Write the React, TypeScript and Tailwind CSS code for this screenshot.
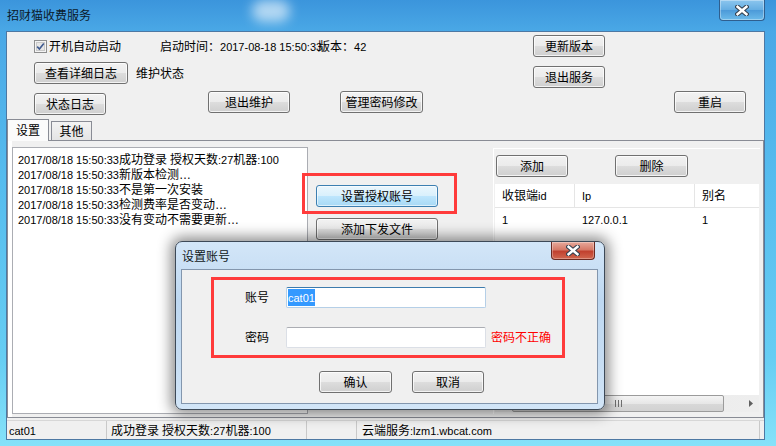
import React from "react";

function T({ s }: { s: string }) {
  const parts = s.match(/[\x00-\xff]+|[^\x00-\xff]+/g) || [];
  return (
    <span className="whitespace-pre">
      {parts.map((p, i) =>
        /^[\x00-\xff]/.test(p) ? (
          <span key={i} className="text-[11px]">{p}</span>
        ) : (
          <span key={i} className="text-[12px]">{p}</span>
        )
      )}
    </span>
  );
}

function Btn({ label, className, focus }: { label: string; className: string; focus?: boolean }) {
  return (
    <div
      className={
        "flex h-[22px] shrink-0 items-center justify-center rounded-[3px] border leading-[14px] text-black " +
        (focus
          ? "border-[#3c7fb1] bg-[linear-gradient(180deg,#eaf6fd_0%,#d9f0fc_50%,#bee6fd_50%,#a7d9f5_100%)] shadow-[inset_0_0_0_1px_rgba(255,255,255,0.6)] "
          : "border-[#707070] bg-[linear-gradient(180deg,#f2f2f2_0%,#ebebeb_50%,#dddddd_50%,#cfcfcf_100%)] shadow-[inset_0_0_0_1px_rgba(255,255,255,0.75)] ") +
        className
      }
    >
      <T s={label} />
    </div>
  );
}

function XIcon() {
  return (
    <svg width="14" height="11" viewBox="0 0 14 11">
      <path d="M2.5 1.8 L11.5 9.2 M11.5 1.8 L2.5 9.2" stroke="#34404f" strokeWidth="4.6" strokeLinecap="square" />
      <path d="M2.5 1.8 L11.5 9.2 M11.5 1.8 L2.5 9.2" stroke="#ffffff" strokeWidth="2.4" strokeLinecap="square" />
    </svg>
  );
}

export default function App() {
  const logs = [
    "2017/08/18 15:50:33成功登录 授权天数:27机器:100",
    "2017/08/18 15:50:33新版本检测…",
    "2017/08/18 15:50:33不是第一次安装",
    "2017/08/18 15:50:33检测费率是否变动…",
    "2017/08/18 15:50:33没有变动不需要更新…",
  ];
  return (
    <div className="relative h-[446px] w-[776px] overflow-hidden bg-[linear-gradient(180deg,#3b95dc_0%,#4aa8e6_7%,#56bcee_40%,#66cdf3_80%,#85e2f9_100%)] font-['Liberation_Sans','Noto_Sans_CJK_SC',sans-serif] text-black select-none">
      {/* desktop reflection blob */}
      <div className="absolute left-[252px] top-[0px] h-[22px] w-[38px] rounded-full bg-white/60 blur-[6px]" />
      {/* title bar */}
      <div className="relative flex h-[31px] items-start">
        <div className="ml-[7px] mt-[8px] leading-[14px] text-[#0b1a2b]">
          <T s="招财猫收费服务" />
        </div>
        <div className="ml-auto mr-[11px] flex h-[21px] w-[46px] items-center justify-center rounded-b-[4px] border border-t-0 border-[#2f5f8f] bg-[linear-gradient(180deg,#8cc6ee_0%,#64ade2_50%,#4c9ad9_52%,#6cbbea_100%)] shadow-[inset_0_0_0_1px_rgba(255,255,255,0.35)]">
          <XIcon />
        </div>
      </div>

      {/* client area */}
      <div className="ml-[6px] flex h-[409px] w-[759px] flex-col border border-[#4d78a3] bg-[#f0f0f0]">
        {/* row 1 */}
        <div className="mt-[3px] flex h-[22px] items-center leading-[14px]">
          <div className="ml-[27px] flex w-[126px] items-center gap-[2px]">
            <svg width="13" height="13" viewBox="0 0 13 13">
              <rect x="0.5" y="0.5" width="12" height="12" fill="#f4f4f4" stroke="#8e8f8f" />
              <rect x="2.5" y="2.5" width="8" height="8" fill="#e6e6e6" stroke="#c9c9c9" />
              <path d="M3.2 6.6 L5.4 9 L9.8 3.4" stroke="#3f5a8f" strokeWidth="1.6" fill="none" />
            </svg>
            <span className="whitespace-nowrap"><T s="开机自动启动" /></span>
          </div>
          <div className="w-[158px] whitespace-nowrap"><T s="启动时间：2017-08-18 15:50:33" /></div>
          <div className="w-[215px] whitespace-nowrap"><T s="版本：42" /></div>
          <Btn label="更新版本" className="w-[72px]" />
        </div>
        {/* row 2 */}
        <div className="mt-[5px] flex h-[26px] items-start leading-[14px]">
          <Btn label="查看详细日志" className="ml-[27px] w-[94px]" />
          <div className="ml-[8px] flex h-[22px] w-[397px] items-center"><T s="维护状态" /></div>
          <Btn label="退出服务" className="mt-[4px] w-[72px]" />
        </div>
        {/* row 3 */}
        <div className="mt-[3px] flex h-[24px] items-start">
          <Btn label="状态日志" className="ml-[27px] mt-[2px] w-[72px]" />
          <Btn label="退出维护" className="ml-[102px] w-[82px]" />
          <Btn label="管理密码修改" className="ml-[50px] w-[83px]" />
          <Btn label="重启" className="ml-[251px] w-[72px]" />
        </div>
        {/* tabs */}
        <div className="mt-[4px] flex h-[21px] items-end leading-[14px]">
          <div className="relative z-10 mb-[-1px] flex h-[22px] w-[42px] items-center justify-center border border-b-0 border-[#898c95] bg-[#fbfbfb]">
            <T s="设置" />
          </div>
          <div className="ml-[2px] flex h-[19px] w-[41px] items-center justify-center border border-b-0 border-[#898c95] bg-[linear-gradient(180deg,#f3f3f3,#e4e4e4)]">
            <T s="其他" />
          </div>
        </div>
        {/* tab panel */}
        <div className="flex h-[278px] border border-[#898c95] bg-[#f0f0f0]">
          <div className="w-[4px] bg-white" />
          <div className="mt-[6px] h-[267px] w-[296px] border border-[#abadb3] bg-white pl-[5px] pt-[4px] leading-[13px]">
            {logs.map((l, i) => (
              <div key={i} className="whitespace-nowrap"><T s={l} /></div>
            ))}
          </div>
          <div className="relative w-[185px]">
            <Btn label="设置授权账号" focus className="ml-[8px] mt-[44px] w-[122px]" />
            <Btn label="添加下发文件" className="ml-[8px] mt-[11px] w-[122px]" />
            <div className="absolute left-[-6px] top-[32px] h-[41px] w-[155px] border-[3px] border-[#ff3b3b]" />
          </div>
          <div className="mt-[7px] flex h-[266px] w-[267px] flex-col border-l border-t border-white bg-[#f0f0f0]">
            <div className="mt-[6px] flex">
              <Btn label="添加" className="ml-[2px] w-[72px]" />
              <Btn label="删除" className="ml-[47px] w-[73px]" />
            </div>
            <div className="ml-[1px] mt-[7px] flex h-[228px] w-[264px] flex-col bg-white leading-[14px]">
              <div className="flex h-[24px] border-b border-[#e5e5e5]">
                <div className="flex w-[80px] items-center border-r border-[#e5e5e5] pl-[7px]"><T s="收银端id" /></div>
                <div className="flex w-[120px] items-center border-r border-[#e5e5e5] pl-[7px]"><T s="Ip" /></div>
                <div className="flex flex-1 items-center pl-[7px]"><T s="别名" /></div>
              </div>
              <div className="mt-[3px] flex h-[17px] items-center">
                <div className="w-[80px] pl-[7px]"><T s="1" /></div>
                <div className="w-[120px] pl-[7px]"><T s="127.0.0.1" /></div>
                <div className="flex-1 pl-[7px]"><T s="1" /></div>
              </div>
              <div className="mt-auto flex h-[17px] bg-[linear-gradient(90deg,#e8e8e8,#eeeeee)]">
                <div className="flex w-[17px] items-center justify-center">
                  <svg width="4" height="7" viewBox="0 0 4 7"><path d="M4 0 L0 3.5 L4 7 Z" fill="#606060" /></svg>
                </div>
                <div className="flex h-[17px] w-[212px] items-center justify-center rounded-[2px] border border-[#9b9b9b] bg-[linear-gradient(180deg,#f4f4f4_0%,#e7e7e7_50%,#d8d8d8_51%,#d2d2d2_100%)]">
                  <div className="flex gap-[2px]">
                    <div className="h-[7px] w-[1px] bg-[#6f6f6f]" />
                    <div className="h-[7px] w-[1px] bg-[#6f6f6f]" />
                    <div className="h-[7px] w-[1px] bg-[#6f6f6f]" />
                  </div>
                </div>
                <div className="flex-1" />
                <div className="flex w-[17px] items-center justify-center">
                  <svg width="4" height="7" viewBox="0 0 4 7"><path d="M0 0 L4 3.5 L0 7 Z" fill="#606060" /></svg>
                </div>
              </div>
            </div>
          </div>
        </div>
        {/* status bar */}
        <div className="mt-[2px] flex h-[19px] items-center border-t border-[#d7d7d7] bg-[#f0f0f0] leading-[14px]">
          <div className="flex h-full w-[100px] items-center border-r border-[#c9c9c9] pl-[2px]"><T s="cat01" /></div>
          <div className="flex h-full w-[200px] items-center border-r border-[#c9c9c9] pl-[4px] whitespace-nowrap"><T s="成功登录 授权天数:27机器:100" /></div>
          <div className="h-full w-[50px] border-r border-[#c9c9c9]" />
          <div className="flex h-full w-[403px] items-center border-r border-[#c9c9c9] pl-[5px] whitespace-nowrap"><T s="云端服务:lzm1.wbcat.com" /></div>
        </div>
      </div>

      {/* dialog */}
      <div className="absolute left-[175px] top-[241px] flex h-[169px] w-[430px] flex-col rounded-[7px] border border-[#3d4957] bg-[linear-gradient(180deg,#d3e6f8_0%,#bed8f1_35%,#c6ddf3_70%,#d2e5f7_100%)] shadow-[0_0_14px_4px_rgba(0,0,0,0.45)]">
        <div className="flex h-[27px] items-start">
          <div className="ml-[6px] mt-[7px] leading-[14px] text-[#101820]"><T s="设置账号" /></div>
          <div className="ml-auto mr-[9px] flex h-[18px] w-[44px] items-center justify-center rounded-b-[4px] border border-t-0 border-[#6b2a22] bg-[linear-gradient(180deg,#e7a99b_0%,#d67a68_45%,#c1412f_55%,#d1674f_100%)] shadow-[inset_0_0_0_1px_rgba(255,255,255,0.3)]">
            <XIcon />
          </div>
        </div>
        <div className="ml-[5px] flex h-[135px] w-[417px] flex-col border border-[#8396ad] bg-[#f0f0f0] leading-[14px]">
          <div className="ml-[29px] mt-[7px] h-[81px] w-[354px] border-[3px] border-[#ff3b3b]">
            <div className="mt-[7px] flex h-[21px] items-center">
              <div className="ml-[31px] w-[41px]"><T s="账号" /></div>
              <div className="flex h-[21px] w-[200px] items-center rounded-[2px] border border-[#b5cfe7] border-t-[#3d7bad] bg-white pl-[1px]">
                <span className="bg-[#3399ff] leading-[16px] text-white"><T s="cat01" /></span>
              </div>
            </div>
            <div className="mt-[19px] flex h-[21px] items-center">
              <div className="ml-[31px] w-[41px]"><T s="密码" /></div>
              <div className="h-[21px] w-[200px] rounded-[2px] border border-[#dbdfe6] border-t-[#abadb3] bg-white" />
              <div className="ml-[5px] whitespace-nowrap text-[#ff0000]"><T s="密码不正确" /></div>
            </div>
          </div>
          <div className="mt-[13px] flex">
            <Btn label="确认" className="ml-[137px] w-[73px]" />
            <Btn label="取消" className="ml-[20px] w-[72px]" />
          </div>
        </div>
      </div>
    </div>
  );
}
